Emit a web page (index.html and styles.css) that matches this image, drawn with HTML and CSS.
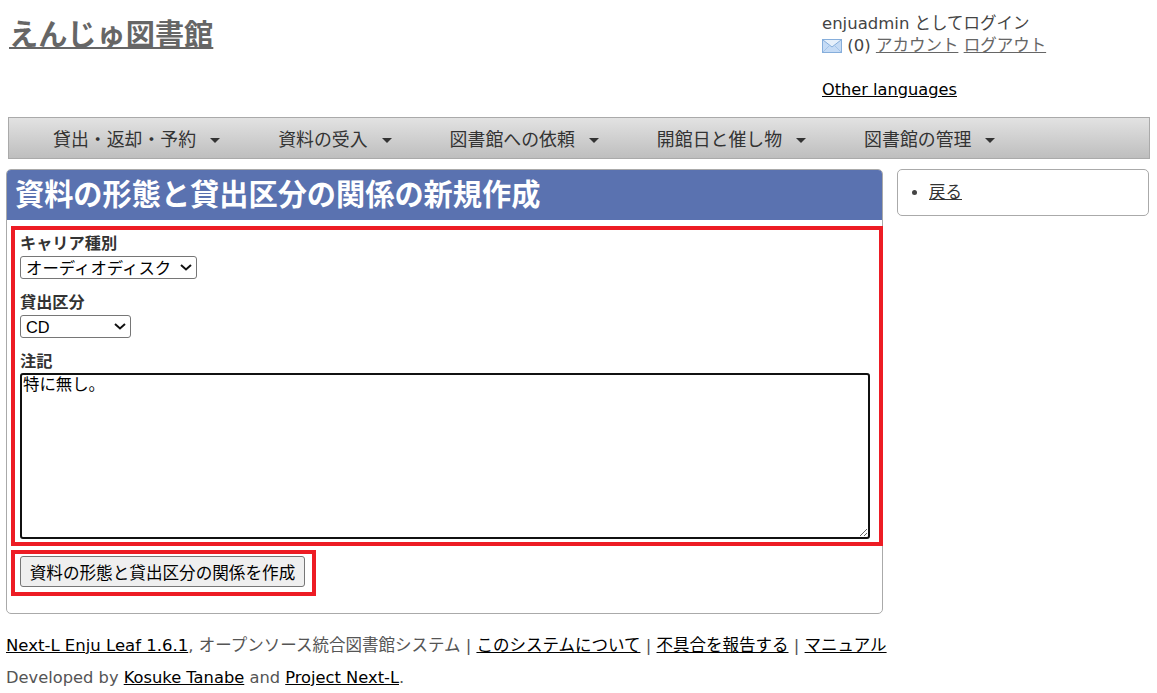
FILE: index.html
```html
<!DOCTYPE html>
<html lang="ja">
<head>
  <title>資料の形態と貸出区分の関係の新規作成</title>
  <link rel="stylesheet" href="styles.css">
</head>
<body>
  <div class="header">
    <h1 class="site-title"><a href="#">えんじゅ図書館</a></h1>
    <div class="user-info">
      <div>enjuadmin としてログイン</div>
      <div>
        <svg class="mail-icon" width="20" height="14" viewBox="0 0 20 14">
          <rect x="0.5" y="0.5" width="19" height="13" fill="#c5dbf5" stroke="#86aedb"/>
          <path d="M1 1 L10 8 L19 1" fill="#e6f0fb" stroke="#86aedb"/>
          <path d="M1 13 L7.5 6.5 M19 13 L12.5 6.5" fill="none" stroke="#a3c3e8"/>
        </svg>
        (0) <a class="gray-link" href="#">アカウント</a> <a class="gray-link" href="#">ログアウト</a>
      </div>
      <div class="languages"><a href="#">Other languages</a></div>
    </div>
  </div>

  <div class="menu">
    <a href="#">貸出・返却・予約<span class="arrow"></span></a>
    <a href="#">資料の受入<span class="arrow"></span></a>
    <a href="#">図書館への依頼<span class="arrow"></span></a>
    <a href="#">開館日と催し物<span class="arrow"></span></a>
    <a href="#">図書館の管理<span class="arrow"></span></a>
  </div>

  <div class="content">
    <div class="main">
      <h2 class="page-title">資料の形態と貸出区分の関係の新規作成</h2>
      <form class="entry-form">
        <div class="field">
          <label for="carrier">キャリア種別</label>
          <select id="carrier" class="carrier-select"><option>オーディオディスク</option></select>
        </div>
        <div class="field">
          <label for="checkout">貸出区分</label>
          <select id="checkout" class="checkout-select"><option>CD</option></select>
        </div>
        <div class="field">
          <label class="note-label" for="note">注記</label>
          <textarea id="note">特に無し。</textarea>
        </div>
        <button type="button" class="submit-btn">資料の形態と貸出区分の関係を作成</button>
      </form>
      <!-- red annotation boxes on top of the form -->
      <div class="mark mark-fields"></div>
      <div class="mark mark-button"></div>
    </div>
    <div class="side">
      <ul>
        <li><a href="#">戻る</a></li>
      </ul>
    </div>
  </div>

  <div class="footer">
    <p><a href="#">Next-L Enju Leaf 1.6.1</a>, オープンソース統合図書館システム | <a href="#">このシステムについて</a> | <a href="#">不具合を報告する</a> | <a href="#">マニュアル</a></p>
    <p class="credit">Developed by <a href="#">Kosuke Tanabe</a> and <a href="#">Project Next-L</a>.</p>
  </div>
</body>
</html>
```

FILE: styles.css
```css
body {
  font-family: "DejaVu Sans", "Noto Sans CJK JP", sans-serif;
  font-size: 16.5px;
  color: #444;
  background-color: #fff;
  margin: 0;
  padding: 0;
}
a {
  color: #000;
}
.gray-link {
  color: #666;
}
.header {
  display: flex;
  height: 117px;
}
.site-title {
  width: 822px;
  margin: 0;
  padding: 16px 0 0 9px;
  box-sizing: border-box;
  font-size: 29.2px;
  line-height: 38px;
}
.site-title a {
  color: #666;
}
.user-info {
  padding-top: 13px;
  line-height: 22px;
}
.mail-icon {
  vertical-align: -2px;
}
.languages {
  margin-top: 22px;
  font-size: 16.2px;
}
.menu {
  display: flex;
  height: 42px;
  box-sizing: border-box;
  margin: 0 7px 0 8px;
  padding-left: 44px;
  gap: 58px;
  align-items: center;
  border: 1px solid #aaa;
  background: linear-gradient(#e2e2e2, #bebebe);
  font-size: 17.9px;
}
.menu a {
  color: #333;
  text-decoration: none;
  white-space: nowrap;
}
.arrow {
  display: inline-block;
  margin-left: 14px;
  vertical-align: 3px;
  border-left: 5px solid transparent;
  border-right: 5px solid transparent;
  border-top: 5px solid #333;
}
.content {
  display: flex;
  align-items: flex-start;
  margin: 10px 8px 0 6px;
  gap: 14px;
}
.main {
  position: relative;
  width: 877px;
  height: 445px;
  box-sizing: border-box;
  border: 1px solid #aaa;
  border-radius: 5px;
}
.page-title {
  margin: 0;
  height: 50px;
  padding-left: 8px;
  background-color: #5a72b0;
  color: #fff;
  font-size: 29.2px;
  line-height: 51px;
  border-radius: 4px 4px 0 0;
}
.entry-form {
  padding: 13px 13px 0;
}
.field {
  margin-bottom: 13px;
}
.field label {
  display: block;
  padding-bottom: 2px;
  font-family: "Liberation Sans", "Noto Sans CJK JP", sans-serif;
  font-weight: bold;
  font-size: 16.2px;
  line-height: 21px;
  color: #333;
}
.field .note-label {
  line-height: 20px;
}
select {
  display: block;
  height: 23px;
  padding: 0 0 0 5px;
  appearance: none;
  font-family: "Liberation Sans", "Noto Sans CJK JP", sans-serif;
  font-size: 16.4px;
  color: #000;
  border: 1px solid #767676;
  border-radius: 3px;
  background: #fff url("data:image/svg+xml,%3Csvg xmlns='http://www.w3.org/2000/svg' width='12' height='7'%3E%3Cpath d='M1 1l5 4.5L11 1' fill='none' stroke='%23111' stroke-width='2'/%3E%3C/svg%3E") no-repeat right 4px center;
}
.carrier-select {
  width: 177px;
}
.checkout-select {
  width: 111px;
}
textarea {
  display: block;
  width: 850px;
  height: 166px;
  box-sizing: border-box;
  margin: 0;
  padding: 0 1px 1px;
  border: 2px solid #111;
  border-radius: 3px;
  outline: none;
  font-family: "Liberation Sans", "Noto Sans CJK JP", sans-serif;
  font-size: 16.4px;
  line-height: 18px;
  color: #000;
}
.submit-btn {
  display: block;
  width: 285px;
  height: 31px;
  margin-top: 17px;
  padding: 1px 0 0;
  font-family: "Liberation Sans", "Noto Sans CJK JP", sans-serif;
  font-size: 16.6px;
  color: #000;
  background-color: #efefef;
  border: 1px solid #767676;
  border-radius: 3px;
}
.mark {
  position: absolute;
  box-sizing: border-box;
  border: 4px solid #ed1c24;
}
.mark-fields {
  left: 4px;
  top: 56px;
  width: 872px;
  height: 320px;
}
.mark-button {
  left: 4px;
  top: 380px;
  width: 305px;
  height: 46px;
}
.side {
  width: 252px;
  height: 47px;
  box-sizing: border-box;
  border: 1px solid #aaa;
  border-radius: 5px;
}
.side ul {
  margin: 12px 0 0;
  padding-left: 31px;
  line-height: 22px;
}
.side a {
  color: #333;
}
.footer {
  margin: 21px 0 0 6px;
  color: #555;
  white-space: nowrap;
}
.footer p {
  margin: 0 0 10px;
  line-height: 22px;
}
.footer .credit {
  font-size: 16.3px;
}
```
